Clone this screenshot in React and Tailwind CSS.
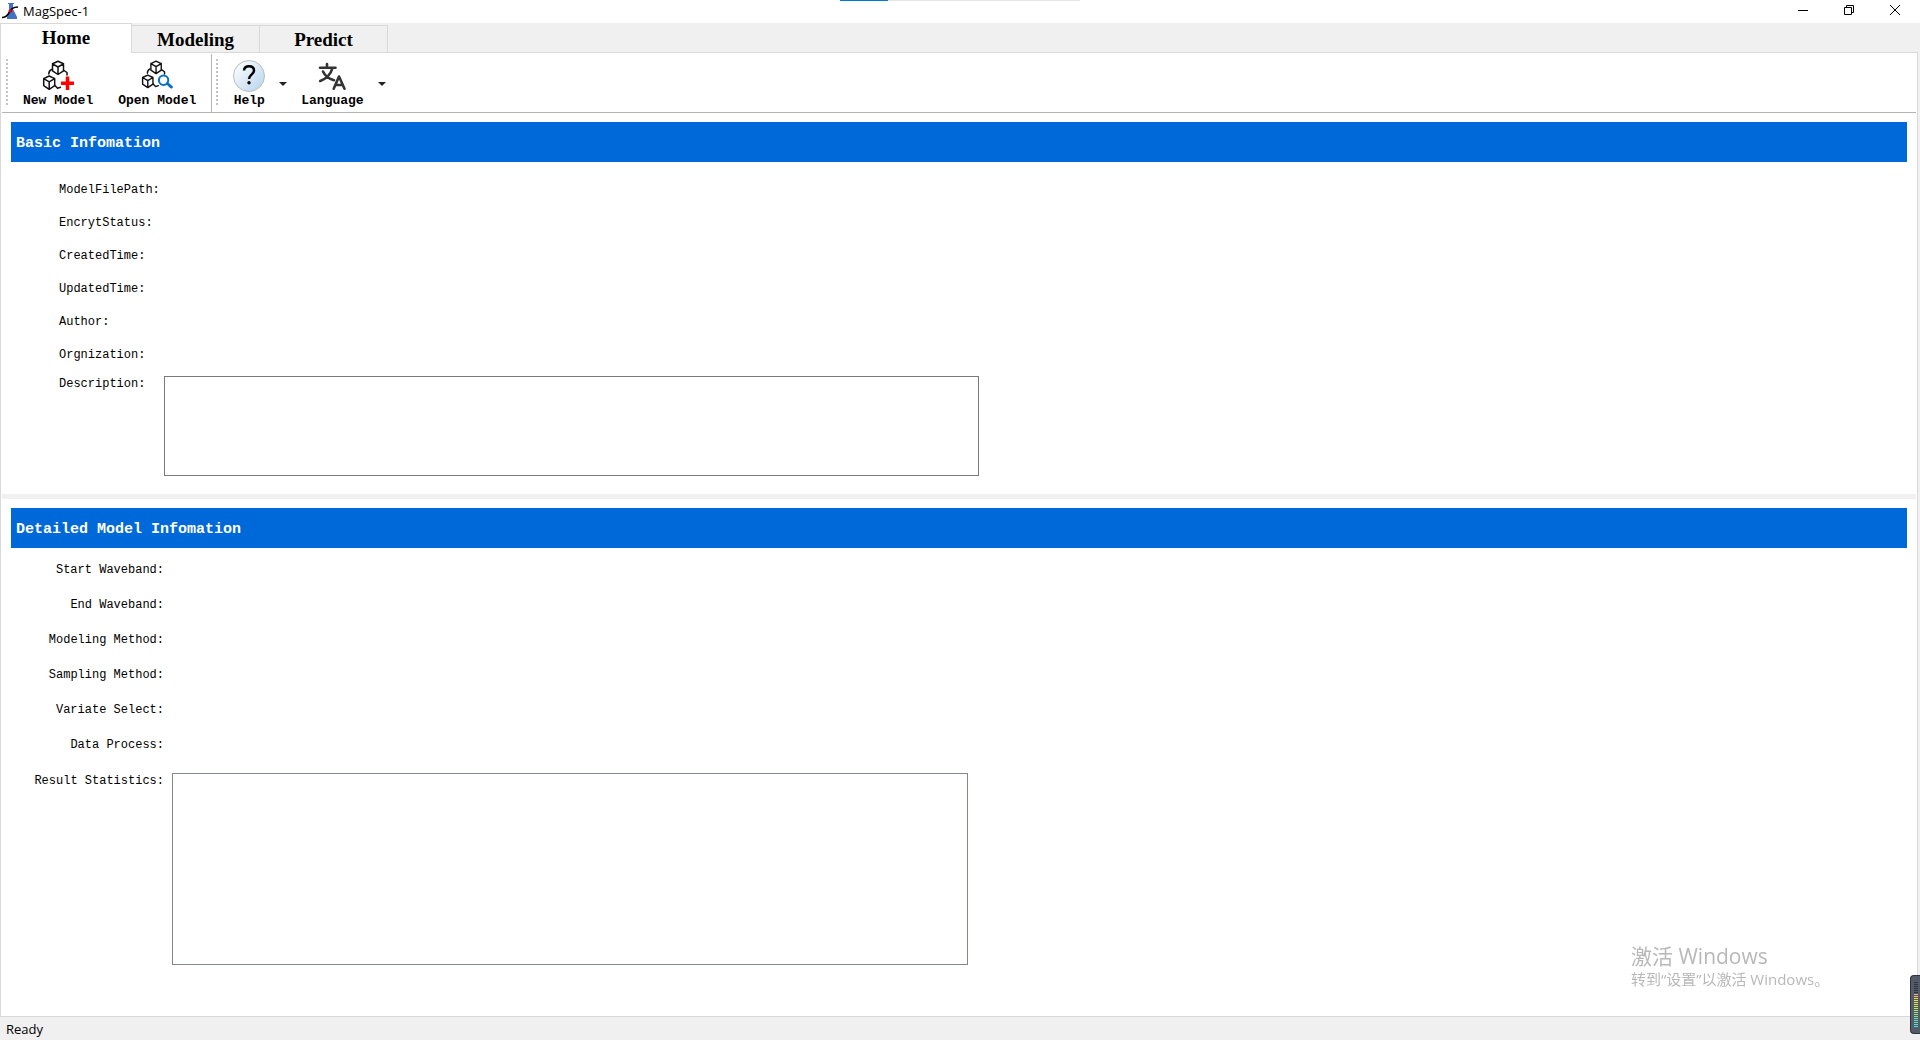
import React, { useState } from "react";

const TABS = ["Home", "Modeling", "Predict"];

const BASIC_FIELDS = [
    { id: "model-file-path", label: "ModelFilePath:" },
    { id: "encrypt-status", label: "EncrytStatus:" },
    { id: "created-time", label: "CreatedTime:" },
    { id: "updated-time", label: "UpdatedTime:" },
    { id: "author", label: "Author:" },
    { id: "organization", label: "Orgnization:" },
];

const DETAIL_FIELDS = [
    { id: "start-waveband", label: "Start Waveband:" },
    { id: "end-waveband", label: "End Waveband:" },
    { id: "modeling-method", label: "Modeling Method:" },
    { id: "sampling-method", label: "Sampling Method:" },
    { id: "variate-select", label: "Variate Select:" },
    { id: "data-process", label: "Data Process:" },
];

const METER_COLORS = [
    "bg-[#2f3340]", "bg-[#2f3340]", "bg-[#2f3340]", "bg-[#2f3340]", "bg-[#2f3340]", "bg-[#2f3340]",
    "bg-[#f5b04c]", "bg-[#f3c845]", "bg-[#f0d840]", "bg-[#eee23e]", "bg-[#e6e640]", "bg-[#dbe846]",
    "bg-[#cde84e]", "bg-[#bde85a]", "bg-[#aae868]", "bg-[#98e878]", "bg-[#84e688]", "bg-[#72e698]",
    "bg-[#64e6a8]", "bg-[#58e6b6]", "bg-[#50e6c2]", "bg-[#4ce6cc]", "bg-[#48e6d2]",
];

const AppLogo = () => (
    <svg viewBox="0 0 18 18" className="h-[18px] w-[18px]" aria-hidden="true">
        <path d="M6 1h6v1h-1v5l4 8v2H5v-2l2-8V2H6z" fill="#4472c4" />
        <path d="M0 15.500c3.500 0 5-1.500 7-4.500s3-6 9-6" fill="none" stroke="#000" strokeWidth="1.500" />
        <circle cx="8.500" cy="9" r="1.800" fill="#e00000" />
    </svg>
);

const Cubes = () => (
    <g fill="none" stroke="#111" strokeWidth="1.500" strokeLinejoin="round" strokeLinecap="round">
        <path d="M16 1.200l5.500 2.600v7L16 14.500l-5.500-3.700v-7zM10.500 3.800L16 7l5.500-3.200M16 7v7.500" />
        <path d="M7.200 16l5.500 2.600v7l-5.500 3.700-5.500-3.700v-7zM1.700 18.600l5.500 3.200 5.500-3.200M7.200 21.800v7.500" />
        <path d="M9.500 9.500c-2 1-2.700 2.500-2.700 4.500M22 10.500l3 2v2.500M13 25.500l2.500 2.800 3-1" />
    </g>
);

const NewModelIcon = () => (
    <svg viewBox="0 0 32 32" className="h-8 w-8" aria-hidden="true">
        <Cubes />
        <path d="M25.500 16.500v13.500M19 23.300h13" stroke="#f00" strokeWidth="3.500" />
    </svg>
);

const OpenModelIcon = () => (
    <svg viewBox="0 0 34 34" className="h-8 w-8" aria-hidden="true">
        <Cubes />
        <circle cx="24" cy="21.500" r="5" fill="#fff" stroke="#0a70c4" strokeWidth="2.200" />
        <path d="M28 25l4.300 3.800" stroke="#0a70c4" strokeWidth="3" strokeLinecap="round" />
    </svg>
);

const HelpIcon = () => (
    <svg viewBox="0 0 32 32" className="h-8 w-8" aria-hidden="true">
        <defs>
            <linearGradient id="help-fill" x1="0" y1="0" x2="1" y2="1">
                <stop offset="0.150" stopColor="#f8fbfe" />
                <stop offset="1" stopColor="#b4d2ec" />
            </linearGradient>
        </defs>
        <circle cx="16" cy="16" r="15.500" fill="url(#help-fill)" stroke="#b9bec4" />
        <path d="M11 10.500c.3-3 2.300-4.300 5-4.300 3 0 5 1.700 5 4.300 0 4.300-5 4-5 8.500" fill="none" stroke="#000" strokeWidth="2.500" />
        <circle cx="16" cy="22.800" r="1.700" fill="#000" />
    </svg>
);

const LanguageIcon = () => (
    <svg viewBox="0 0 32 32" className="h-8 w-8" aria-hidden="true">
        <g fill="none" stroke="#333" strokeWidth="2.600" strokeLinecap="round" strokeLinejoin="round">
            <path d="M11 4v3.200M4 7.700h15.500M16.500 8c-1.500 5.500-5.500 10.300-12.300 13M7 11.500c2 4.300 5.500 7.300 11 8.700" />
            <path d="M17.700 28.700L23 16.500l5.500 12.200M19.700 25h7" />
        </g>
    </svg>
);

const ToolButton = ({ icon, label }) => (
    <button type="button" className="flex flex-col items-center gap-px px-2.5 hover:bg-sky-50">
        {icon}
        <span className="whitespace-nowrap font-['Liberation_Mono',monospace] text-[13px] leading-4 font-bold">
            {label}
        </span>
    </button>
);

const MenuArrow = ({ label }) => (
    <button type="button" aria-label={label} className="flex w-4 items-center justify-center pb-1 hover:bg-sky-50">
        <svg viewBox="0 0 8 4" className="h-1 w-2" aria-hidden="true">
            <path d="M0 0h8L4 4z" fill="#222" />
        </svg>
    </button>
);

const Grip = () => (
    <div className="my-[5px] w-0.5 bg-[repeating-linear-gradient(to_bottom,#c4c4c4_0_2px,transparent_2px_4px)]" />
);

const SectionTitle = ({ children }) => (
    <h2 className="bg-[#0069d9] px-[5px] pt-1 font-['Liberation_Mono',monospace] text-[15px] leading-9 font-bold text-white">
        {children}
    </h2>
);

const App = () => {
    const [active, setActive] = useState("Home");

    return (
        <div className="flex h-screen flex-col overflow-hidden bg-[#f0f0f0] font-['Open_Sans','Noto_Sans_CJK_SC',sans-serif] text-black">
            {/* title bar */}
            <header className="flex h-[23px] shrink-0 items-start bg-white">
                <div className="flex items-center gap-[3px] pt-0.5 pl-0.5">
                    <AppLogo />
                    <h1 className="text-[13px] leading-[18px]">MagSpec-1</h1>
                </div>
                <div className="mr-0.5 ml-auto flex h-5">
                    <button type="button" aria-label="Minimize" className="flex w-[46px] items-center justify-center">
                        <svg viewBox="0 0 10 10" className="h-2.5 w-2.5"><path d="M0 5.500h10" stroke="#000" /></svg>
                    </button>
                    <button type="button" aria-label="Restore" className="flex w-[46px] items-center justify-center">
                        <svg viewBox="0 0 10 10" className="h-2.5 w-2.5">
                            <path d="M.5 2.500h7v7h-7zM2.500 2.500v-2h7v7h-2" fill="none" stroke="#000" />
                        </svg>
                    </button>
                    <button type="button" aria-label="Close" className="flex w-[46px] items-center justify-center">
                        <svg viewBox="0 0 10 10" className="h-2.5 w-2.5">
                            <path d="M0 0l10 10M10 0L0 10" stroke="#000" />
                        </svg>
                    </button>
                </div>
            </header>

            {/* tabs */}
            <nav role="tablist" className="flex h-[30px] shrink-0 items-end font-['Liberation_Serif',serif] text-[19px] font-bold">
                {TABS.map((tab) => (
                    <button
                        key={tab}
                        type="button"
                        role="tab"
                        aria-selected={active === tab}
                        onClick={() => setActive(tab)}
                        className={
                            active === tab
                                ? "z-10 h-[30px] w-33 border-x border-t border-[#d9d9d9] bg-white"
                                : "h-7 w-32 border-y border-r border-[#d9d9d9]"
                        }
                    >
                        {tab}
                    </button>
                ))}
                <div className="mr-0.5 h-px flex-1 bg-[#d9d9d9]" />
            </nav>

            <main className="mr-0.5 flex min-h-0 flex-1 flex-col border-x border-b border-[#d9d9d9] bg-white px-px">
                {/* toolbar */}
                <div role="toolbar" className="flex h-15 shrink-0 border-b border-[#b4b4b4] pt-px">
                    <div className="flex gap-[5px] border-r border-[#b4b4b4] pr-[5px] pl-1">
                        <Grip />
                        <div className="flex gap-[5px] pt-1.5">
                            <ToolButton icon={<NewModelIcon />} label="New Model" />
                            <ToolButton icon={<OpenModelIcon />} label="Open Model" />
                        </div>
                    </div>
                    <div className="flex gap-[5px] pl-1">
                        <Grip />
                        <div className="flex pt-1.5">
                            <ToolButton icon={<HelpIcon />} label="Help" />
                            <MenuArrow label="Help menu" />
                            <ToolButton icon={<LanguageIcon />} label="Language" />
                            <MenuArrow label="Language menu" />
                        </div>
                    </div>
                </div>

                <section className="px-[9px] pt-[9px] pb-[18px]">
                    <SectionTitle>Basic Infomation</SectionTitle>
                    <div className="pt-[11px] font-['Liberation_Mono',monospace] text-xs">
                        {BASIC_FIELDS.map((field) => (
                            <div key={field.id} className="flex h-[33px] items-center">
                                <label htmlFor={field.id} className="w-[153px] pl-12">{field.label}</label>
                                <output id={field.id} />
                            </div>
                        ))}
                        <div className="flex pt-[5px]">
                            <label htmlFor="description" className="w-[153px] shrink-0 pl-12">Description:</label>
                            <textarea id="description" className="h-25 w-[43%] resize-none border border-[#7a7a7a] p-1 outline-none" />
                        </div>
                    </div>
                </section>

                <div className="h-[5px] shrink-0 bg-[#f0f0f0]" />

                <section className="px-[9px] pt-[9px]">
                    <SectionTitle>Detailed Model Infomation</SectionTitle>
                    <div className="pt-1 font-['Liberation_Mono',monospace] text-xs">
                        {DETAIL_FIELDS.map((field) => (
                            <div key={field.id} className="flex h-[35px] items-center gap-2">
                                <label htmlFor={field.id} className="w-[153px] text-right">{field.label}</label>
                                <output id={field.id} />
                            </div>
                        ))}
                        <div className="flex gap-2 pt-[11px]">
                            <label htmlFor="result-statistics" className="w-[153px] shrink-0 text-right">
                                Result Statistics:
                            </label>
                            <textarea id="result-statistics" className="h-48 w-[42%] resize-none border border-[#828790] p-1 outline-none" />
                        </div>
                    </div>
                </section>
            </main>

            <footer className="h-[23px] shrink-0 pt-[3px] pl-1.5 text-[13px] leading-[18px]">Ready</footer>

            {/* capture progress strip on the top edge */}
            <div className="fixed top-0 left-1/2 flex h-px w-[240px] -translate-x-1/2 bg-[#e5e5e5]">
                <div className="w-12 bg-[#0078d7]" />
            </div>

            {/* activation notice */}
            <div className="pointer-events-none fixed right-0 bottom-[51px] w-[289px] text-[#b8b8b8]">
                <p className="text-[21px] leading-[26px]">激活 Windows</p>
                <p className="text-[15px] leading-5">转到“设置”以激活 Windows。</p>
            </div>

            {/* level meter docked on the right edge */}
            <div className="fixed right-0 bottom-1.5 flex h-[59px] w-2.5 flex-col gap-px rounded-l-sm border-y border-l border-[#2f3340] bg-[#555a68] pt-1.5 pr-0.5 pl-[3px]">
                {METER_COLORS.map((color, idx) => (
                    <span key={idx} className={`h-px shrink-0 ${color}`} />
                ))}
            </div>
        </div>
    );
};

export default App;
